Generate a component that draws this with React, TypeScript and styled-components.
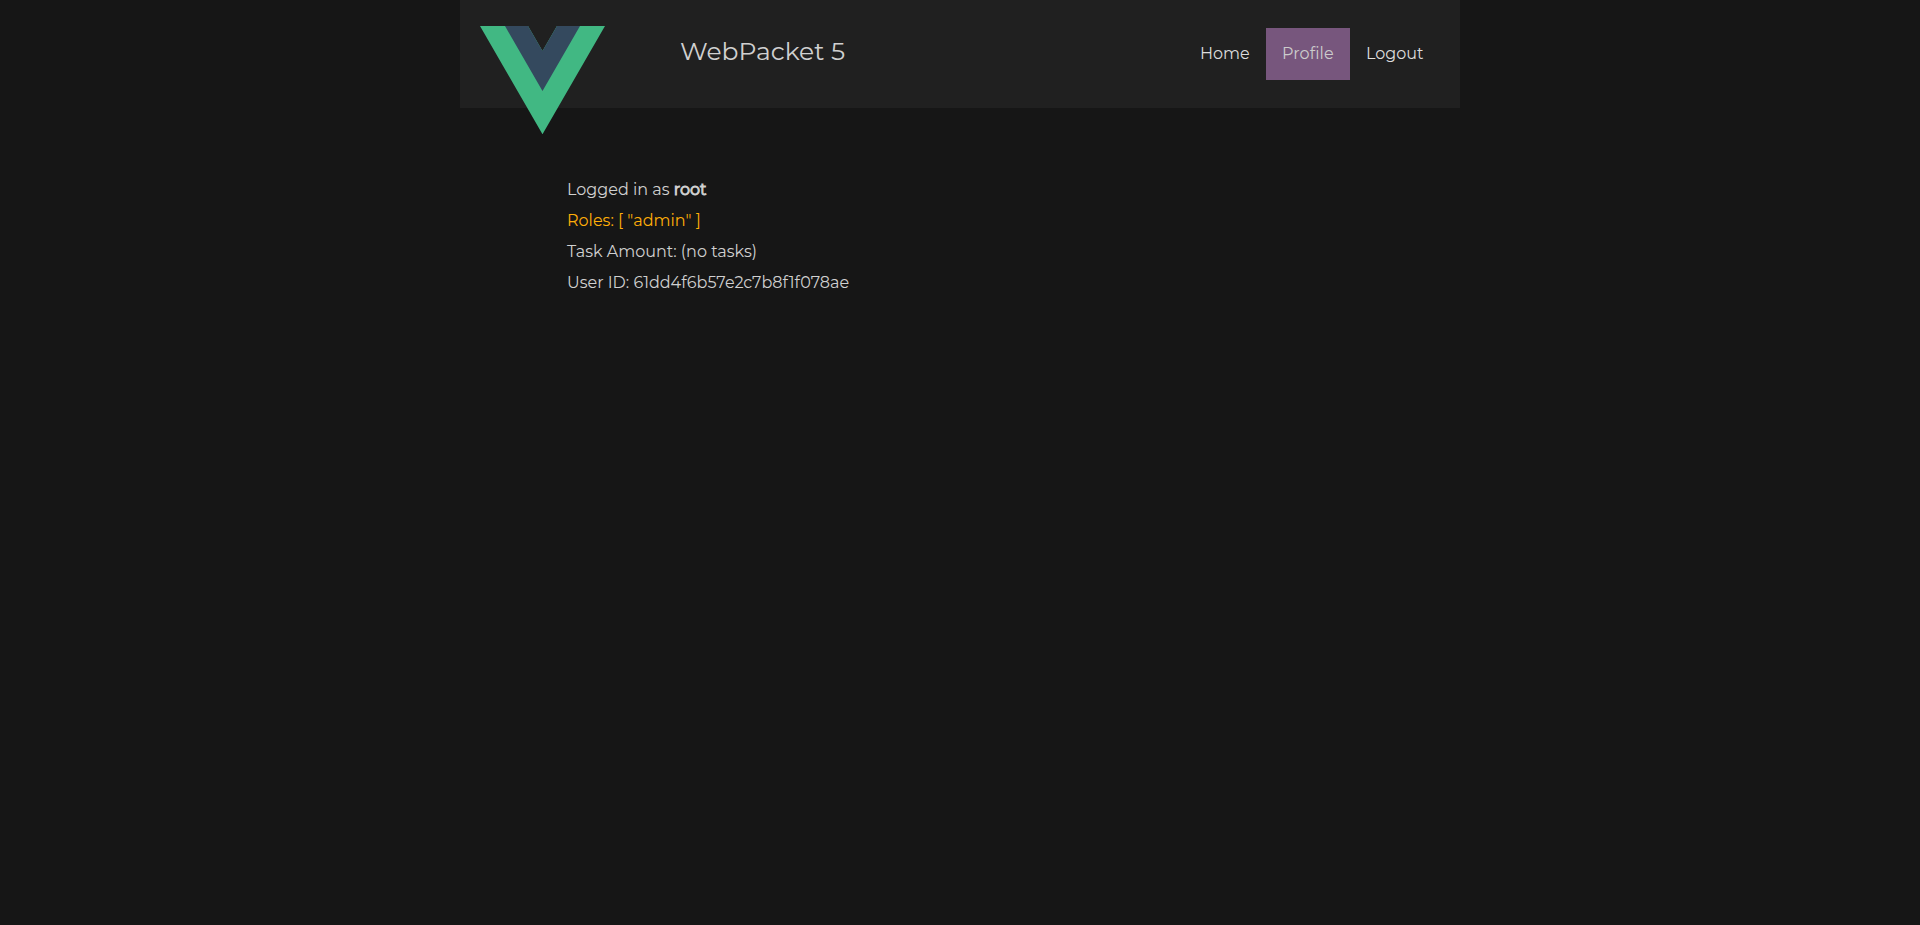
import React from "react";
import styled, { createGlobalStyle } from "styled-components";

const GlobalStyle = createGlobalStyle`
  body {
    margin: 0;
    background: #161616;
    color: #d0d0d0;
    font-family: Montserrat, Inter, sans-serif;
    font-size: 16px;
  }
`;

const Page = styled.div`
  width: 1000px;
  margin: 0 auto;
`;

const Header = styled.header`
  display: flex;
  align-items: flex-start;
  box-sizing: border-box;
  height: 108px;
  padding: 0 20px;
  background: #202020;
`;

const Logo = styled.svg`
  flex: none;
  width: 125px;
  height: 108.25px;
  margin-top: 26px;
`;

const Title = styled.h1`
  margin: 36px 0 0 75px;
  font-size: 25px;
  font-weight: 400;
  line-height: 31px;
  white-space: nowrap;
`;

const Nav = styled.nav`
  display: flex;
  margin: 28px 0 0 auto;
`;

const NavLink = styled.a<{ $active?: boolean; $width: number }>`
  box-sizing: border-box;
  width: ${(p) => p.$width}px;
  height: 52px;
  padding: 0 16px;
  line-height: 52px;
  white-space: nowrap;
  letter-spacing: ${(p) => (p.$active ? "0.1px" : "normal")};
  color: ${(p) => (p.$active ? "#cccccc" : "#dddddd")};
  background: ${(p) => (p.$active ? "#77567d" : "transparent")};
`;

const Profile = styled.main`
  padding: 66px 0 0 107px;
`;

const Line = styled.p<{ $highlight?: boolean }>`
  margin: 0;
  line-height: 31px;
  white-space: nowrap;
  color: ${(p) => (p.$highlight ? "#ffae08" : "inherit")};
`;

const UserName = styled.b`
  font-weight: 400;
  -webkit-text-stroke: 0.9px currentColor;
`;

export default function App() {
  return (
    <>
      <GlobalStyle />
      <Page>
        <Header>
          <Logo viewBox="0 0 261.76 226.69" aria-label="Vue">
            <path fill="#41b883" d="M161.096 0l-30.225 52.351L100.647 0H0l130.877 226.688L261.749 0z" />
            <path fill="#34495e" d="M161.096 0l-30.225 52.351L100.647 0H52.346l78.526 136.01L209.398 0z" />
          </Logo>
          <Title>WebPacket 5</Title>
          <Nav>
            <NavLink $width={82}>Home</NavLink>
            <NavLink $width={84} $active>Profile</NavLink>
            <NavLink $width={90}>Logout</NavLink>
          </Nav>
        </Header>
        <Profile>
          <Line>
            Logged in as <UserName>root</UserName>
          </Line>
          <Line $highlight>Roles: [ "admin" ]</Line>
          <Line>Task Amount: (no tasks)</Line>
          <Line>User ID: 61dd4f6b57e2c7b8f1f078ae</Line>
        </Profile>
      </Page>
    </>
  );
}
